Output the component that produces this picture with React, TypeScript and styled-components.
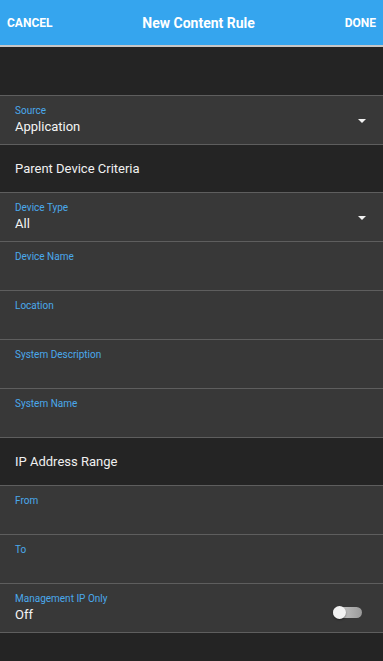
import React from "react";
import styled, { createGlobalStyle } from "styled-components";

const Global = createGlobalStyle`
  html, body { margin: 0; padding: 0; background: #242424; }
  body { font-family: Roboto, "Noto Sans", sans-serif; -webkit-font-smoothing: antialiased; }
  * { box-sizing: border-box; }
`;

const Page = styled.div`
  width: 383px;
  min-height: 661px;
  background: #242424;
  display: flex;
  flex-direction: column;
`;

const Header = styled.header`
  height: 47px;
  background: #35a5ee;
  border-bottom: 2px solid #c6c6c6;
  display: flex;
  align-items: center;
  padding: 0 7px;
  color: #fff;
`;

const HeaderButton = styled.button`
  background: none;
  border: none;
  padding: 0;
  color: #fff;
  font-family: Roboto, sans-serif;
  font-weight: 700;
  font-size: 12px;
  cursor: pointer;
`;

const Title = styled.h1`
  flex: 1;
  margin: 0;
  text-align: center;
  font-size: 14px;
  font-weight: 700;
  color: #fff;
`;

const Spacer = styled.div`
  height: 49px;
  border-bottom: 1px solid #5e5e5e;
`;

const SectionHeader = styled.div`
  height: 48px;
  border-bottom: 1px solid #5e5e5e;
  display: flex;
  align-items: center;
  padding: 0 15px 1px;
  font-size: 13px;
  color: #f0f0f0;
`;

const Field = styled.div`
  height: 49px;
  background: #383838;
  border-bottom: 1px solid #5e5e5e;
  display: flex;
  align-items: flex-start;
  justify-content: space-between;
  padding: 9px 17px 0 15px;
`;

const FieldText = styled.div`
  display: flex;
  flex-direction: column;
`;

const Label = styled.span`
  font-size: 10px;
  line-height: 12px;
  color: #4aa9ec;
`;

const Value = styled.span`
  font-size: 13px;
  line-height: 18px;
  margin-top: 1px;
  color: #f4f4f4;
`;

const Caret = styled.span`
  width: 0;
  height: 0;
  margin-top: 14px;
  border-left: 4px solid transparent;
  border-right: 4px solid transparent;
  border-top: 4px solid #f2f2f2;
`;

const Toggle = styled.span`
  position: relative;
  width: 29px;
  height: 11px;
  margin: 14px 4px 0 0;
  border-radius: 6px;
  background: linear-gradient(90deg, #d0d0d0, #9a9a9a);
`;

const Knob = styled.span`
  position: absolute;
  left: 0;
  top: -1px;
  width: 13px;
  height: 13px;
  border-radius: 50%;
  background: #f2f2f2;
  box-shadow: 0 1px 2px rgba(0, 0, 0, 0.4);
`;

type FieldProps = { label: string; value?: string; select?: boolean; toggle?: boolean };

const FormField = ({ label, value, select, toggle }: FieldProps) => (
  <Field>
    <FieldText>
      <Label>{label}</Label>
      {value && <Value>{value}</Value>}
    </FieldText>
    {select && <Caret />}
    {toggle && (
      <Toggle>
        <Knob />
      </Toggle>
    )}
  </Field>
);

export default function App() {
  return (
    <Page>
      <Global />
      <Header>
        <HeaderButton>CANCEL</HeaderButton>
        <Title>New Content Rule</Title>
        <HeaderButton>DONE</HeaderButton>
      </Header>
      <Spacer />
      <FormField label="Source" value="Application" select />
      <SectionHeader>Parent Device Criteria</SectionHeader>
      <FormField label="Device Type" value="All" select />
      <FormField label="Device Name" />
      <FormField label="Location" />
      <FormField label="System Description" />
      <FormField label="System Name" />
      <SectionHeader>IP Address Range</SectionHeader>
      <FormField label="From" />
      <FormField label="To" />
      <FormField label="Management IP Only" value="Off" toggle />
    </Page>
  );
}
